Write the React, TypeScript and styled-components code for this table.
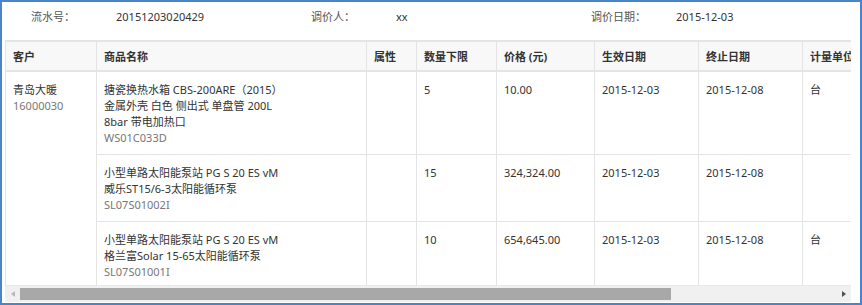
import React from "react";
import styled, { createGlobalStyle } from "styled-components";

const GlobalStyle = createGlobalStyle`
  html, body { margin: 0; padding: 0; background: #fff; }
  body { font-family: "Noto Sans", "Noto Sans CJK SC", sans-serif; font-size: 11px; color: #333; }
`;

const Frame = styled.div`
  box-sizing: border-box;
  width: 862px;
  height: 305px;
  border: 2px solid #4a85c9;
  padding: 0 9px 1px 3px;
  display: flex;
  flex-direction: column;
  background: #fff;
  overflow: hidden;
`;

const InfoBar = styled.div`
  height: 38px;
  display: flex;
  align-items: flex-start;
  padding: 7px 0 0 26px;
  box-sizing: border-box;
  line-height: 16px;
`;

const Field = styled.div`
  width: 280px;
  flex-shrink: 0;
  display: flex;
`;

const FieldLabel = styled.span`
  width: 85px;
  flex-shrink: 0;
  color: #555;
`;

const FieldValue = styled.span`
  color: #333;
`;

const ScrollArea = styled.div`
  width: 846px;
  height: 245px;
  overflow: hidden;
`;

const Table = styled.table`
  table-layout: fixed;
  width: 891px;
  border-collapse: collapse;
  border-left: 1px solid #e4e4e4;
`;

const HeadCell = styled.th`
  height: 28px;
  padding: 0 7px;
  text-align: left;
  font-weight: bold;
  color: #333;
  background: #f8f8f8;
  border-top: 2px solid #e4e4e4;
  border-bottom: 2px solid #e4e4e4;
  border-right: 1px solid #e4e4e4;
  white-space: nowrap;
  overflow: hidden;
`;

const Cell = styled.td`
  padding: 10px 7px 8px;
  vertical-align: top;
  line-height: 16px;
  border-bottom: 1px solid #e4e4e4;
  border-right: 1px solid #e4e4e4;
  color: #333;
  white-space: nowrap;
`;

const Line = styled.div<{ $muted?: boolean }>`
  color: ${(p) => (p.$muted ? "#777" : "#333")};
`;

const ScrollBar = styled.div`
  width: 846px;
  height: 17px;
  display: flex;
  background: #f0f0f0;
  border-top: 1px solid #e8e8e8;
  box-sizing: border-box;
`;

const ArrowButton = styled.div<{ $dir: "left" | "right"; $disabled?: boolean }>`
  width: 15px;
  display: flex;
  align-items: center;
  justify-content: center;
  &::before {
    content: "";
    width: 0;
    height: 0;
    border-top: 3.5px solid transparent;
    border-bottom: 3.5px solid transparent;
    ${(p) =>
      p.$dir === "left"
        ? `border-right: 4px solid ${p.$disabled ? "#b8b8b8" : "#505050"};`
        : `border-left: 4px solid ${p.$disabled ? "#b8b8b8" : "#505050"};`}
  }
`;

const Track = styled.div`
  flex: 1;
  display: flex;
  align-items: center;
`;

const Thumb = styled.div`
  height: 12px;
  background: #a8a8a8;
`;

type Row = {
  product: string[];
  code: string;
  attr: string;
  min: string;
  price: string;
  start: string;
  end: string;
  unit: string;
};

const rows: Row[] = [
  {
    product: ["搪瓷换热水箱 CBS-200ARE（2015）", "金属外壳 白色 侧出式 单盘管 200L", "8bar 带电加热口"],
    code: "WS01C033D",
    attr: "",
    min: "5",
    price: "10.00",
    start: "2015-12-03",
    end: "2015-12-08",
    unit: "台",
  },
  {
    product: ["小型单路太阳能泵站 PG S 20 ES vM", "威乐ST15/6-3太阳能循环泵"],
    code: "SL07S01002I",
    attr: "",
    min: "15",
    price: "324,324.00",
    start: "2015-12-03",
    end: "2015-12-08",
    unit: "",
  },
  {
    product: ["小型单路太阳能泵站 PG S 20 ES vM", "格兰富Solar 15-65太阳能循环泵"],
    code: "SL07S01001I",
    attr: "",
    min: "10",
    price: "654,645.00",
    start: "2015-12-03",
    end: "2015-12-08",
    unit: "台",
  },
];

const columns = [
  { title: "客户", width: 91 },
  { title: "商品名称", width: 270 },
  { title: "属性", width: 50 },
  { title: "数量下限", width: 80 },
  { title: "价格 (元)", width: 98 },
  { title: "生效日期", width: 104 },
  { title: "终止日期", width: 104 },
  { title: "计量单位", width: 94 },
];

export default function App() {
  return (
    <>
      <GlobalStyle />
      <Frame>
        <InfoBar>
          <Field>
            <FieldLabel>流水号：</FieldLabel>
            <FieldValue>20151203020429</FieldValue>
          </Field>
          <Field>
            <FieldLabel>调价人：</FieldLabel>
            <FieldValue>xx</FieldValue>
          </Field>
          <Field>
            <FieldLabel>调价日期：</FieldLabel>
            <FieldValue>2015-12-03</FieldValue>
          </Field>
        </InfoBar>
        <ScrollArea>
          <Table>
            <colgroup>
              {columns.map((c) => (
                <col key={c.title} style={{ width: c.width }} />
              ))}
            </colgroup>
            <thead>
              <tr>
                {columns.map((c) => (
                  <HeadCell key={c.title}>{c.title}</HeadCell>
                ))}
              </tr>
            </thead>
            <tbody>
              {rows.map((r, i) => (
                <tr key={r.code}>
                  {i === 0 && (
                    <Cell rowSpan={rows.length}>
                      <Line>青岛大暖</Line>
                      <Line $muted>16000030</Line>
                    </Cell>
                  )}
                  <Cell>
                    {r.product.map((p) => (
                      <Line key={p}>{p}</Line>
                    ))}
                    <Line $muted>{r.code}</Line>
                  </Cell>
                  <Cell>{r.attr}</Cell>
                  <Cell>{r.min}</Cell>
                  <Cell>{r.price}</Cell>
                  <Cell>{r.start}</Cell>
                  <Cell>{r.end}</Cell>
                  <Cell>{r.unit}</Cell>
                </tr>
              ))}
            </tbody>
          </Table>
        </ScrollArea>
        <ScrollBar>
          <ArrowButton $dir="left" $disabled />
          <Track>
            <Thumb style={{ width: `${(846 / 891) * 84}%` }} />
          </Track>
          <ArrowButton $dir="right" />
        </ScrollBar>
      </Frame>
    </>
  );
}
